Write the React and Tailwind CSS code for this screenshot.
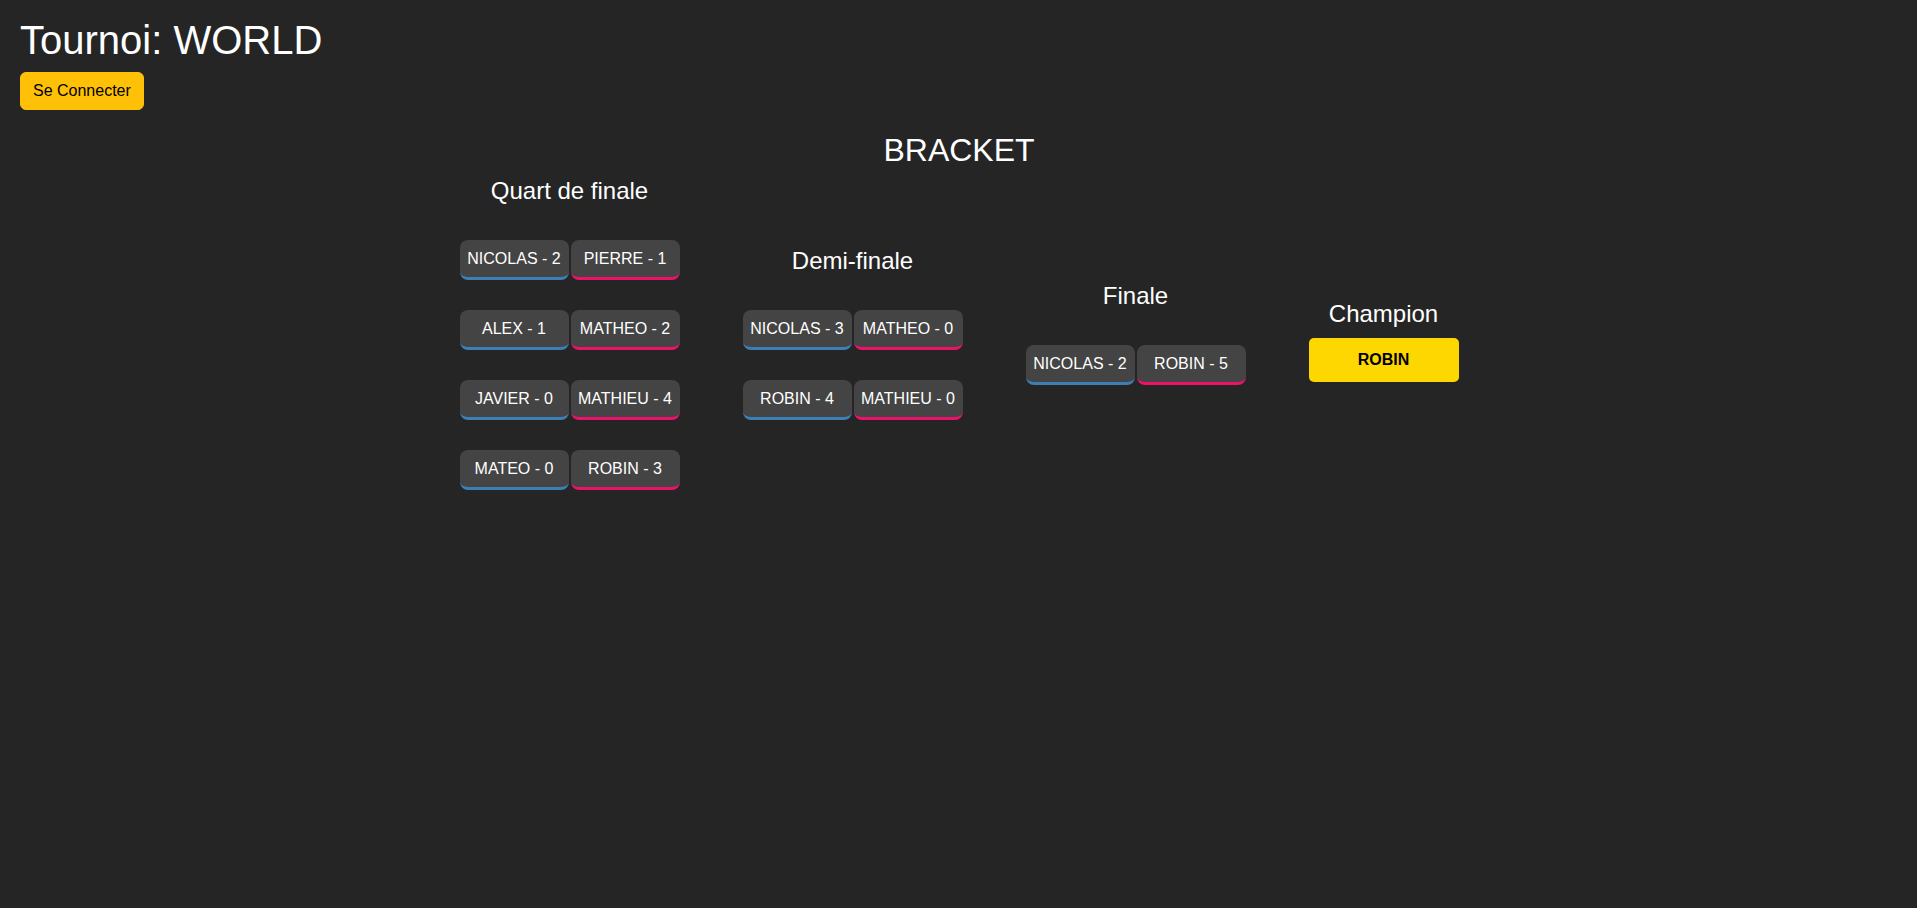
import React from "react";

const rounds = [
  {
    title: "Quart de finale",
    matches: [
      ["NICOLAS - 2", "PIERRE - 1"],
      ["ALEX - 1", "MATHEO - 2"],
      ["JAVIER - 0", "MATHIEU - 4"],
      ["MATEO - 0", "ROBIN - 3"],
    ],
  },
  {
    title: "Demi-finale",
    matches: [
      ["NICOLAS - 3", "MATHEO - 0"],
      ["ROBIN - 4", "MATHIEU - 0"],
    ],
  },
  {
    title: "Finale",
    matches: [["NICOLAS - 2", "ROBIN - 5"]],
  },
];

function Player({ name, side }) {
  return (
    <div
      className={
        "w-[109px] h-10 box-border flex items-center justify-center rounded-[8px] bg-[#444444] text-white text-[16px] leading-6 border-b-[3px] whitespace-nowrap " +
        (side === 0 ? "border-[#3c7fb6]" : "border-[#ee1169]")
      }
    >
      {name}
    </div>
  );
}

function Round({ title, matches }) {
  return (
    <div className="flex flex-col items-center w-[220px]">
      <h3 className="text-[24px] leading-[1.2] text-white mb-[34px]">{title}</h3>
      <div className="flex flex-col gap-[30px]">
        {matches.map((m, i) => (
          <div key={i} className="flex gap-[2px]">
            <Player name={m[0]} side={0} />
            <Player name={m[1]} side={1} />
          </div>
        ))}
      </div>
    </div>
  );
}

export default function App() {
  return (
    <div
      className="min-h-screen bg-[#252525] text-white pt-4 px-5"
      style={{ fontFamily: '"Liberation Sans", Arial, sans-serif' }}
    >
      <h1 className="text-[40px] leading-[1.2] mb-2 text-white">Tournoi: WORLD</h1>
      <button className="bg-[#ffc107] text-black text-[16px] leading-6 px-3 py-[6px] border border-[#ffc107] rounded-[6px]">
        Se Connecter
      </button>
      <div className="mt-[21px] flex flex-col items-center pl-[1px] -mx-5">
        <h2 className="text-[32px] leading-[1.2] mb-2 text-white">BRACKET</h2>
        <div className="flex items-center gap-[63px]">
          {rounds.map((r) => (
            <Round key={r.title} title={r.title} matches={r.matches} />
          ))}
          <div className="flex flex-col items-center w-[150px] pt-[15px]">
            <h3 className="text-[24px] leading-[1.2] text-white mb-[9px]">Champion</h3>
            <div className="w-[150px] h-[44px] flex items-center justify-center rounded-[5px] bg-[#ffd700] text-black font-bold text-[16px]">
              ROBIN
            </div>
          </div>
        </div>
      </div>
    </div>
  );
}
